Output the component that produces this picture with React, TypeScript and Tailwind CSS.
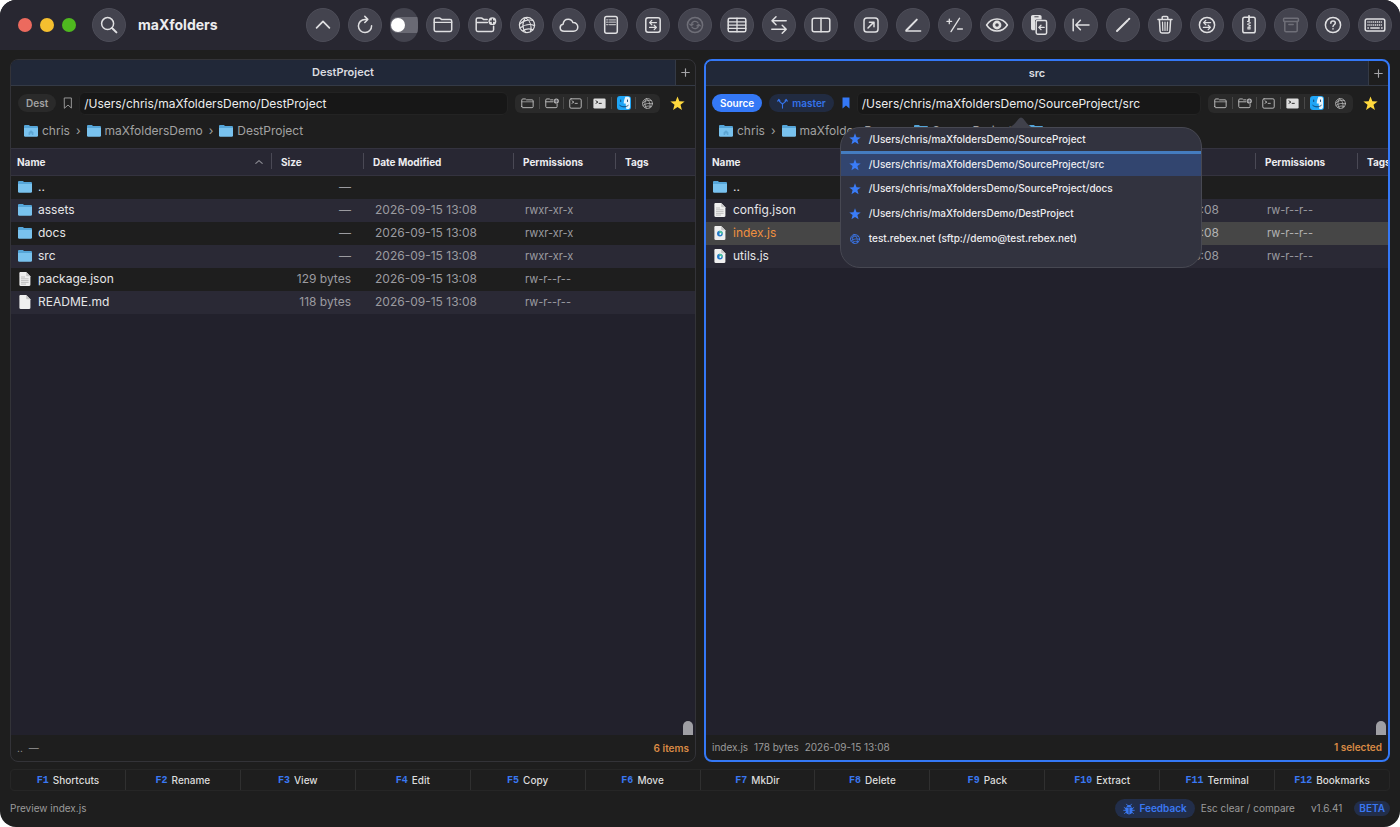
import type { ReactNode } from "react";
import clsx from "clsx";

type IconProps = { name: keyof typeof GLYPHS; size?: number; className?: string };

const FOLDER = (
  <>
    <path d="M1.2 14.8V4.6c0-1 .6-1.6 1.6-1.6h3.400c.6 0 1 .2 1.400.6l.9.8h8.600c1 0 1.600.6 1.600 1.600v8.800c0 1-.6 1.600-1.600 1.600H2.800c-1 0-1.600-.6-1.600-1.600z" />
    <path d="M1.200 7.400h17.500" strokeWidth="1.100" />
  </>
);

const GLOBE = (
  <g strokeWidth="1.200">
    <circle cx="10" cy="10" r="7.600" />
    <path d="M8.400 2.600c-3.400 4.400-3.400 10.400.2 14.900M8.400 2.600c4.600 3 6.600 8.600 5.200 14.100M16 5.400C11 4.200 5.400 6 2.500 9.400M17.600 10.600C13 8.800 7 9.800 3 13M16 14.800c-3.200-1.400-6.800-1.400-10.200.8" />
  </g>
);

// All glyphs share a 20x20 grid and are stroked with the current colour.
const GLYPHS = {
  search: (
    <>
      <circle cx="8.600" cy="8.600" r="6" />
      <path d="m13 13 4.400 4.400" strokeWidth="2" />
    </>
  ),
  up: <path d="M3.600 12.800 10 6.400l6.400 6.400" strokeWidth="1.700" />,
  refresh: <path d="M16.600 10.800A6.600 6.600 0 1 1 10 4.400h2.600M9.800 1.400l3 3-3 3.100" />,
  folder: FOLDER,
  newFolder: (
    <>
      <path d="M12.200 4.400H8.500l-.9-.8c-.4-.4-.8-.6-1.400-.6H2.800c-1 0-1.600.6-1.600 1.600v10.200c0 1 .6 1.600 1.600 1.600h14.200c1 0 1.600-.6 1.600-1.600v-3.600M1.200 7.400h11.200" />
      <circle cx="17.400" cy="6.200" r="3.900" fill="currentColor" stroke="none" />
      <path d="M17.400 4.200v4M15.400 6.200h4" stroke="#3c3c46" strokeWidth="1.200" />
    </>
  ),
  globe: GLOBE,
  cloud: (
    <path d="M5.200 16.200c-2.400 0-4-1.500-4-3.500 0-1.800 1.200-3.100 2.900-3.400.3-3 2.300-5.100 5.100-5.100 2.200 0 4 1.200 4.700 3.300 2.800-.1 4.900 1.800 4.900 4.400 0 2.400-1.800 4.300-4.300 4.300z" />
  ),
  document: (
    <>
      <rect x="3.700" y="1.600" width="12.600" height="16.600" rx="2" />
      <path d="M5.600 4.800h1.400M8.400 4.800h6M5.600 7.200h1.400M8.400 7.200h6M5.600 9.600h1.400M8.400 9.600h6" strokeWidth="1.200" opacity=".75" />
    </>
  ),
  syncBox: (
    <>
      <rect x="2.800" y="2.800" width="14.400" height="14.400" rx="2.200" />
      <path d="M13.400 7.600H6.800M8.800 5.400 6.600 7.600l2.200 2.200M6.600 12.400h6.600M11.200 10.200l2.200 2.200-2.200 2.200" strokeWidth="1.300" />
    </>
  ),
  syncCircle: (
    <>
      <circle cx="10" cy="10" r="7.600" />
      <path d="M6.400 9.600a3.700 3.700 0 0 1 6.600-1.800M13.600 10.400a3.700 3.700 0 0 1-6.600 1.800M4.800 9.200l1.600 1.400L8 9.200M12 10.800l1.600-1.400 1.600 1.400" strokeWidth="1.300" />
    </>
  ),
  table: (
    <>
      <rect x="1.200" y="3.200" width="17.600" height="13.600" rx="1.600" />
      <path d="M1.200 6.800h17.600M1.200 10.100h17.600M1.200 13.400h17.600M10 3.200v13.600" strokeWidth="1.300" />
    </>
  ),
  swap: <path d="M17.200 5.800H3.200M7 1.800 3 5.800l4 4M2.800 14.200h14M13.200 10.200l4 4-4 4" />,
  columns: (
    <>
      <rect x="1.200" y="3.200" width="17.600" height="13.600" rx="2" />
      <path d="M10 3.200v13.600" />
    </>
  ),
  open: (
    <>
      <rect x="3" y="3" width="14" height="14" rx="2.800" />
      <path d="m7 13 5.600-5.600M8.400 7.200H13v4.600" />
    </>
  ),
  rename: (
    <>
      <path d="M3.400 15.200 13.800 4.600" strokeWidth="2" />
      <path d="M3 16h14.600" />
    </>
  ),
  plusMinus: <path d="M6 16.600 14.600 3.200M2 6.400h4.600M4.300 4.100v4.600M12.600 14h4.800" strokeWidth="1.300" />,
  eye: (
    <>
      <path d="M-.4 10C2 6.200 5.800 4 10 4s8 2.200 10.400 6c-2.400 3.800-6.200 6-10.400 6S2 13.800-.4 10z" />
      <circle cx="10" cy="10" r="3.100" strokeWidth="2.600" />
    </>
  ),
  paste: (
    <>
      <path d="M3.800 0h7c1 0 1.800.8 1.800 1.800v2.600H7.600c-1 0-1.600.8-1.600 1.600v9.200H3.800c-1 0-1.800-.8-1.800-1.800V1.800C2 .8 2.800 0 3.800 0z" fill="currentColor" stroke="none" />
      <path d="M5.800 1.800h3.400" stroke="#43434e" strokeWidth="1" />
      <rect x="7.200" y="5.600" width="10.400" height="13.600" rx="1.400" />
      <path d="M15.200 12.400H9.800M12 10.200l-2.200 2.200 2.200 2.200" strokeWidth="1.300" />
    </>
  ),
  toStart: <path d="M2.200 4.200v11.600M18 10H5M9.400 5.200 4.800 10l4.600 4.800" />,
  pencil: <path d="M4 16 14.800 5.200M16 4l.3-.3" strokeWidth="2" />,
  trash: (
    <>
      <path d="M3 4.400h14M7.200 4.200V2.600c0-.7.400-1.100 1.100-1.100h3.400c.7 0 1.100.4 1.100 1.100v1.600M4.400 4.600l.7 11.600c.1 1 .8 1.700 1.800 1.700h6.200c1 0 1.700-.7 1.800-1.700l.7-11.600" />
      <path d="m7.500 7 .3 8.400M10 7v8.400M12.500 7l-.3 8.400" strokeWidth="1.200" />
    </>
  ),
  swapCircle: (
    <>
      <circle cx="10" cy="10" r="7.600" />
      <path d="M13.600 7.600H6.800M8.800 5.400 6.600 7.600l2.200 2.200M6.400 12.400h6.800M11.200 10.200l2.200 2.200-2.200 2.200" strokeWidth="1.300" />
    </>
  ),
  zip: (
    <>
      <rect x="3.800" y="2.200" width="12.400" height="15.600" rx="1.800" />
      <path d="M10 .8v5" strokeWidth="1.800" />
      <path d="M8.600 6.400h1.400M10 7.800h1.400M8.600 9.200h1.400M10 10.600h1.400M9 12.200h2v1.800H9z" strokeWidth="1.200" />
    </>
  ),
  archive: (
    <>
      <rect x="2.600" y="3.200" width="14.800" height="3.200" rx=".8" />
      <path d="M3.800 6.400v9c0 .8.600 1.400 1.400 1.400h9.600c.8 0 1.400-.6 1.400-1.400v-9M7.800 9.400h4.400" />
    </>
  ),
  help: (
    <>
      <circle cx="10" cy="10" r="7.600" />
      <path d="M7.800 8.200c0-1.300.9-2.100 2.200-2.100s2.300.8 2.300 1.900c0 1.800-2.300 1.700-2.300 3.500M10 13.700v.2" />
    </>
  ),
  keyboard: (
    <>
      <rect x=".2" y="4" width="19.600" height="12" rx="1.800" />
      <path d="M2.400 7h15.200M2.400 9.900h15.200" strokeDasharray="1.200 .7" strokeLinecap="butt" strokeWidth="1.500" />
      <path d="M2.400 13.100h1.500M5.300 13.100h9.400M16.100 13.100h1.500" strokeLinecap="butt" />
    </>
  ),
  terminal: (
    <>
      <rect x="1.200" y="2.800" width="17.600" height="14.400" rx="2" />
      <path d="m4.600 6 3 1.800-3 1.800M9.400 9.800h3.400" strokeWidth="1.400" />
    </>
  ),
  terminalFill: (
    <>
      <rect x=".6" y="2.200" width="18.800" height="15.600" rx="2" fill="currentColor" stroke="none" />
      <path d="m4.600 6 3 1.800-3 1.800M9.400 9.800h3.400" stroke="#2a2a2a" strokeWidth="1.500" />
    </>
  ),
  branch: <path d="M10 18.400V12M10 12C10 8 3.400 9.400 3.400 3.600M10 12c0-4 6.600-2.600 6.600-8.400M1.200 5.600l2.200-3 2.200 3M14.400 5.600l2.200-3 2.200 3" strokeWidth="2" />,
  bookmark: <path d="M4.400 1.600h11.200v16.800L10 13.400l-5.600 5z" />,
  bookmarkFill: <path d="M4.200 1h11.600v18L10 14.200 4.200 19z" fill="currentColor" stroke="none" />,
  star: <path d="m10 .6 2.500 6.500 7 .3-5.500 4.400 1.900 6.800L10 14.800l-5.900 3.800L6 11.800.5 7.400l7-.3z" fill="currentColor" stroke="none" />,
  bug: (
    <>
      <path d="M5 8.400h10v5a5 5 0 0 1-10 0zM6.400 6.800a3.700 3.700 0 0 1 7.200 0" fill="currentColor" />
      <path d="M10 9v8" stroke="#222e4a" strokeWidth="1.200" />
      <path d="M7.400 4 6 2M12.600 4 14 2M5 9.600 2 7.600M5 12.200H1.200M5.600 15l-3 2.400M15 9.600l3-2M15 12.200h3.800M14.400 15l3 2.400" />
    </>
  ),
  sort: <path d="M2 13.600 10 6.400l8 7.200" strokeWidth="2.800" />,
  plus: <path d="M10 1.600v16.800M1.600 10h16.800" strokeWidth="2.600" />,
};

function Icon({ name, size = 20, className }: IconProps) {
  return (
    <svg
      width={size}
      height={size}
      viewBox="0 0 20 20"
      fill="none"
      stroke="currentColor"
      strokeWidth="1.5"
      strokeLinecap="round"
      strokeLinejoin="round"
      className={clsx("shrink-0 overflow-visible", className)}
      aria-hidden
    >
      {GLYPHS[name]}
    </svg>
  );
}

function FolderIcon({ home }: { home?: boolean }) {
  return (
    <svg width="14" height="12" viewBox="0 0 14 12" className="shrink-0" aria-hidden>
      <path d="M0 10.600V1.200C0 .5.500 0 1.200 0h3.200c.4 0 .7.100 1 .4l.8.700h6.600c.7 0 1.200.5 1.200 1.200v8.300z" fill="#55a5d8" />
      <path d="M0 3h14v7.600c0 .8-.4 1.200-1.200 1.200H1.200C.4 11.800 0 11.400 0 10.600z" fill="#79c2ee" />
      {home && <path d="M4.600 7.200 7 5.200l2.400 2v2.900H7.800V8.400H6.200v1.700H4.600z" fill="#5ea6d3" />}
    </svg>
  );
}

function FileIcon({ kind }: { kind: "json" | "text" | "js" }) {
  return (
    <svg width="14" height="14" viewBox="0 0 14 14" className="shrink-0" aria-hidden>
      <path d="M1.400 1.200C1.400.5 1.800.1 2.500.1h5.700l4.200 4.200v8.500c0 .7-.4 1.100-1.100 1.100H2.500c-.7 0-1.100-.4-1.100-1.100z" fill="#efefef" />
      <path d="M8.200.1v3.200c0 .6.400 1 1 1h3.200z" fill="#c6c6c6" />
      {kind === "json" && <path d="M3 5h4M3 6.800h7.600M3 8.600h7.600M3 10.400h7.600M3 12.100h5" stroke="#b4b4b4" strokeWidth=".8" />}
      {kind === "js" && (
        <>
          <circle cx="6.900" cy="7.600" r="2.900" fill="#2479c9" />
          <path d="M5.800 5a2.900 2.900 0 0 1 4 2.800H7.200z" fill="#4fc79b" />
          <circle cx="7.300" cy="7.900" r="1" fill="#e8f4fb" />
        </>
      )}
    </svg>
  );
}

function FinderIcon() {
  return (
    <svg width="14" height="14" viewBox="0 0 14 14" className="shrink-0" aria-hidden>
      <rect width="14" height="14" rx="3" fill="#1fa5f6" />
      <path d="M8.400.8C7.400 3 6.800 5.200 6.700 7.600h2c0 1.900.2 3.700.7 5.400h1.800c1 0 1.800-.8 1.800-1.800V2.800c0-1.200-.8-2-1.800-2z" fill="#e6f4fc" />
      <path d="M3.700 4v1.500M10.500 4v1.500M2.800 9.400c2.400 2 6 2 8.400 0" stroke="#123a63" strokeWidth=".9" strokeLinecap="round" fill="none" />
    </svg>
  );
}

type ToolItem = { icon: keyof typeof GLYPHS; label: string; disabled?: boolean };

const NAV_TOOLS: ToolItem[] = [
  { icon: "folder", label: "Open folder" },
  { icon: "newFolder", label: "New folder" },
  { icon: "globe", label: "Network" },
  { icon: "cloud", label: "Cloud" },
  { icon: "document", label: "Notes" },
  { icon: "syncBox", label: "Sync panes" },
  { icon: "syncCircle", label: "Sync", disabled: true },
  { icon: "table", label: "Table view" },
  { icon: "swap", label: "Swap panes" },
  { icon: "columns", label: "Split view" },
];

const FILE_TOOLS: ToolItem[] = [
  { icon: "open", label: "Open" },
  { icon: "rename", label: "Rename" },
  { icon: "plusMinus", label: "Compare" },
  { icon: "eye", label: "Preview" },
  { icon: "paste", label: "Copy to other pane" },
  { icon: "toStart", label: "Move to other pane" },
  { icon: "pencil", label: "Edit" },
  { icon: "trash", label: "Delete" },
  { icon: "swapCircle", label: "Transfer" },
  { icon: "zip", label: "Pack" },
  { icon: "archive", label: "Extract", disabled: true },
  { icon: "help", label: "Help" },
  { icon: "keyboard", label: "Keyboard shortcuts" },
];

function ToolButton({ icon, label, disabled }: ToolItem) {
  return (
    <button
      type="button"
      aria-label={label}
      disabled={disabled}
      className={clsx(
        "flex h-[34px] w-[34px] shrink-0 items-center justify-center rounded-full border border-[#4d4d58] bg-[#43434e]",
        disabled ? "text-[#6f6f78]" : "text-[#e0e0e2]",
      )}
    >
      <Icon name={icon} />
    </button>
  );
}

function TitleBar() {
  return (
    <header className="flex h-[50px] shrink-0 items-center bg-[#282731] pr-2 pl-[18px]">
      <div className="flex gap-2">
        <button type="button" aria-label="Close" className="h-3.5 w-3.5 rounded-full bg-[#ec6a5e]" />
        <button type="button" aria-label="Minimize" className="h-3.5 w-3.5 rounded-full bg-[#f5bf2f]" />
        <button type="button" aria-label="Zoom" className="h-3.5 w-3.5 rounded-full bg-[#4fb81f]" />
      </div>
      <div className="ml-4">
        <ToolButton icon="search" label="Search" />
      </div>
      <h1 className="ml-3 text-sm font-bold text-[#ececee]">maXfolders</h1>
      <div className="ml-auto flex items-center gap-2">
        <ToolButton icon="up" label="Parent folder" />
        <ToolButton icon="refresh" label="Refresh" />
        <label className="relative flex h-[34px] w-7 items-center overflow-hidden rounded-[14px] bg-[#43434e]">
          <input type="checkbox" role="switch" aria-label="Show hidden files" className="peer sr-only" />
          <span className="flex h-4 w-7 items-center rounded-l-full bg-[#6a6a74] pl-px peer-checked:justify-end peer-checked:bg-[#3478f6]">
            <span className="h-3.5 w-3.5 rounded-full bg-white" />
          </span>
        </label>
        {NAV_TOOLS.map((t) => (
          <ToolButton key={t.icon} {...t} />
        ))}
        <div className="ml-2 flex gap-2">
          {FILE_TOOLS.map((t) => (
            <ToolButton key={t.icon} {...t} />
          ))}
        </div>
      </div>
    </header>
  );
}

const PANE_TOOLS: { label: string; node: ReactNode }[] = [
  { label: "Browse", node: <Icon name="folder" size={13} /> },
  { label: "Create folder", node: <Icon name="newFolder" size={13} /> },
  { label: "Terminal", node: <Icon name="terminal" size={13} /> },
  { label: "External terminal", node: <Icon name="terminalFill" size={13} className="text-[#dedede]" /> },
  { label: "Reveal in Finder", node: <FinderIcon /> },
  { label: "Connect", node: <Icon name="globe" size={13} /> },
];

const BOOKMARKS = [
  "/Users/chris/maXfoldersDemo/SourceProject",
  "/Users/chris/maXfoldersDemo/SourceProject/src",
  "/Users/chris/maXfoldersDemo/SourceProject/docs",
  "/Users/chris/maXfoldersDemo/DestProject",
  "test.rebex.net (sftp://demo@test.rebex.net)",
];

function BookmarkPopover() {
  return (
    <div className="absolute top-[35px] -left-[17px] z-10 w-[362px]">
      <svg width="26" height="11" viewBox="0 0 26 11" className="absolute -top-2.5 left-[168px]" aria-hidden>
        <path d="M0 11C5 10 8 5 10.500 2c1.600-2 3.400-2 5 0C18 5 21 10 26 11z" fill="#40414b" />
      </svg>
      <ul className="h-[141px] overflow-hidden rounded-[20px] border border-[#474852] bg-[#32333f]">
        {BOOKMARKS.map((path, i) => (
          <li key={path}>
            <button
              type="button"
              className={clsx(
                "flex w-full items-center gap-2 px-2 text-left text-[10px] font-medium text-[#ededf0]",
                i === 0 && "h-[23px]",
                i === 1 && "h-[25px] border-t-3 border-[#447cc0] bg-[#32456f]",
                i > 1 && "mt-px h-6",
              )}
            >
              <Icon name={path.startsWith("/") ? "star" : "globe"} size={12} className="text-[#3a7cf8]" />
              {path}
            </button>
          </li>
        ))}
      </ul>
    </div>
  );
}

type Entry = { name: string; kind: "folder" | "json" | "text" | "js"; size: string; date: string; perms: string };

type PaneProps = {
  title: string;
  path: string;
  crumbs: string[];
  entries: Entry[];
  active?: boolean;
  selected?: string;
  nameWidth: string;
  status: string[];
  summary: string;
};

const DATE = "2026-09-15 13:08";

function FileTable({ entries, selected, active, nameWidth }: Pick<PaneProps, "entries" | "selected" | "active" | "nameWidth">) {
  const th = "relative overflow-hidden pl-2.5 text-left text-[10px] font-bold text-[#ededf0]";
  const divider = "before:absolute before:top-1 before:left-0 before:h-4 before:w-px before:bg-[#4a4955]";
  return (
    <table className="w-full table-fixed border-collapse">
      <colgroup>
        <col className={nameWidth} />
        <col className="w-[92px]" />
        <col className="w-[150px]" />
        <col className="w-[102px]" />
        <col />
      </colgroup>
      <thead>
        <tr className="h-[27px] border-y border-[#34333f] bg-[#282733]">
          <th scope="col" className="pr-2 pl-1.5 text-left text-[10px] font-bold text-[#ededf0]">
            <button type="button" className="flex w-full items-center justify-between">
              Name
              {!active && <Icon name="sort" size={8} className="text-[#8b8b93]" />}
            </button>
          </th>
          {["Size", "Date Modified", "Permissions", "Tags"].map((label) => (
            <th key={label} scope="col" className={clsx(th, divider)}>
              {label}
            </th>
          ))}
        </tr>
      </thead>
      <tbody>
        {entries.map((e) => {
          const isSelected = e.name === selected;
          return (
            <tr
              key={e.name}
              className={clsx(
                "h-[23px] text-xs",
                isSelected ? "bg-[#464646] text-[#b4b4b4]" : "text-[#9b9ba0] odd:bg-[#1e1e1e] even:bg-[#2a2935]",
              )}
            >
              <td className="pl-[7px]">
                <span className={clsx("flex items-center gap-1.5", isSelected ? "text-[#f0903f]" : "text-[#e6e6e8]")}>
                  {e.kind === "folder" ? <FolderIcon /> : <FileIcon kind={e.kind} />}
                  {e.name}
                </span>
              </td>
              <td className="pr-3 text-right">{e.size}</td>
              <td className="pl-3">{e.date}</td>
              <td className="pl-3 text-[11px]">{e.perms}</td>
              <td />
            </tr>
          );
        })}
      </tbody>
    </table>
  );
}

function Pane({ title, path, crumbs, entries, active, selected, nameWidth, status, summary }: PaneProps) {
  return (
    <section
      className={clsx(
        "flex min-w-0 flex-col rounded-lg",
        active ? "border-2 border-[#3478f6]" : "border border-[#333338]",
      )}
    >
      <div className={clsx("flex items-stretch border-b border-[#343a46]", active ? "h-[25px]" : "h-[26px]")}>
        <button type="button" className="flex-1 rounded-tl-md bg-[#212838] text-[11px] font-semibold text-[#dcdde0]">
          {title}
        </button>
        <button type="button" aria-label="New tab" className="flex w-5 items-center justify-center border-l border-[#343a46] text-[#a5a5a8]">
          <Icon name="plus" size={9} />
        </button>
      </div>

      <div className={clsx("flex h-[34px] items-center pr-2.5", active ? "pl-1.5" : "pl-[7px]")}>
        <span
          className={clsx(
            "flex h-[18px] items-center rounded-full px-2 text-[10px] font-semibold",
            active ? "bg-[#3478f6] text-white" : "bg-[#2a2a2a] text-[#a2a2a2]",
          )}
        >
          {active ? "Source" : "Dest"}
        </span>
        {active && (
          <button type="button" className="ml-[7px] flex h-[18px] items-center gap-1 rounded-full bg-[#212b41] px-2 text-[10px] font-semibold text-[#3472e8]">
            <Icon name="branch" size={11} />
            master
          </button>
        )}
        <button type="button" aria-label="Bookmarks" className={clsx("ml-1.5", active ? "text-[#3478f6]" : "text-[#a2a2a2]")}>
          <Icon name={active ? "bookmarkFill" : "bookmark"} size={12} />
        </button>
        <div className="relative ml-[5px] min-w-0 flex-1">
          <input
            type="text"
            aria-label={`${title} path`}
            defaultValue={path}
            className="block h-[23px] w-full rounded-md border border-[#232323] bg-[#171717] px-1 text-xs text-[#ededed] outline-none"
          />
          {active && <BookmarkPopover />}
        </div>
        <div className="ml-[7px] flex h-[19px] items-center rounded-md bg-[#2a2a2a] px-1.5 text-[#b9b9b9]">
          {PANE_TOOLS.map((t, i) => (
            <div key={t.label} className="flex items-center">
              {i > 0 && <span className="mx-[5px] h-3 w-px bg-[#484848]" />}
              <button type="button" aria-label={t.label} className="flex w-[13px] justify-center">
                {t.node}
              </button>
            </div>
          ))}
        </div>
        <button type="button" aria-label="Favourite" className="ml-2.5 text-[#fed83d]">
          <Icon name="star" size={15} />
        </button>
      </div>

      <nav aria-label={`${title} location`} className="flex h-7 items-center px-[13px] pb-1.5 text-xs text-[#a2a2a2]">
        {crumbs.map((c, i) => (
          <span key={c} className="flex items-center">
            {i > 0 && <span className="mx-1.5">›</span>}
            <a href={`#${c}`} className="flex items-center gap-1">
              <FolderIcon home={i === 0} />
              {c}
            </a>
          </span>
        ))}
      </nav>

      <div className="relative flex-1 bg-[#22212c]">
        <FileTable entries={entries} selected={selected} active={active} nameWidth={nameWidth} />
        <span className="absolute right-0.5 bottom-0 h-3.5 w-2.5 rounded-t-full bg-[#9f9fa4]" />
      </div>

      <footer className={clsx("flex items-center justify-between px-1.5 text-[10px] text-[#9b9b9b]", active ? "h-[25px]" : "h-[26px]")}>
        <span className="flex gap-1.5">
          {status.map((s) => (
            <span key={s}>{s}</span>
          ))}
        </span>
        <span className="font-semibold text-[#d98a45]">{summary}</span>
      </footer>
    </section>
  );
}

const UP: Entry = { name: "..", kind: "folder", size: "—", date: "", perms: "" };

const DEST: Entry[] = [
  UP,
  { name: "assets", kind: "folder", size: "—", date: DATE, perms: "rwxr-xr-x" },
  { name: "docs", kind: "folder", size: "—", date: DATE, perms: "rwxr-xr-x" },
  { name: "src", kind: "folder", size: "—", date: DATE, perms: "rwxr-xr-x" },
  { name: "package.json", kind: "json", size: "129 bytes", date: DATE, perms: "rw-r--r--" },
  { name: "README.md", kind: "text", size: "118 bytes", date: DATE, perms: "rw-r--r--" },
];

const SOURCE: Entry[] = [
  UP,
  { name: "config.json", kind: "json", size: "64 bytes", date: DATE, perms: "rw-r--r--" },
  { name: "index.js", kind: "js", size: "178 bytes", date: DATE, perms: "rw-r--r--" },
  { name: "utils.js", kind: "js", size: "96 bytes", date: DATE, perms: "rw-r--r--" },
];

const F_KEYS = ["Shortcuts", "Rename", "View", "Edit", "Copy", "Move", "MkDir", "Delete", "Pack", "Extract", "Terminal", "Bookmarks"];

export default function App() {
  return (
    <div className="flex min-h-screen flex-col overflow-hidden rounded-2xl bg-[#1e1e1e] font-['Inter',sans-serif]">
      <TitleBar />
      <main className="grid flex-1 grid-cols-2 gap-2 px-2.5 pt-[9px]">
        <Pane
          title="DestProject"
          path="/Users/chris/maXfoldersDemo/DestProject"
          crumbs={["chris", "maXfoldersDemo", "DestProject"]}
          entries={DEST}
          nameWidth="w-[260px]"
          status={["..", "—"]}
          summary="6 items"
        />
        <Pane
          title="src"
          path="/Users/chris/maXfoldersDemo/SourceProject/src"
          crumbs={["chris", "maXfoldersDemo", "SourceProject", "src"]}
          entries={SOURCE}
          active
          selected="index.js"
          nameWidth="w-[307px]"
          status={["index.js", "178 bytes", DATE]}
          summary="1 selected"
        />
      </main>
      <div className="mx-2.5 mt-[7px] flex h-[22px] divide-x divide-[#303030] rounded border border-[#262626]">
        {F_KEYS.map((label, i) => (
          <button key={label} type="button" className="flex flex-1 items-center justify-center gap-1 text-[10px] font-medium text-[#dcdcdc]">
            <kbd className="font-['Liberation_Mono',monospace] text-[10px] font-bold text-[#3a78f2]">F{i + 1}</kbd>
            {label}
          </button>
        ))}
      </div>
      <footer className="flex h-9 items-center px-2.5 pb-px text-[10px] text-[#9b9b9b]">
        <span>Preview index.js</span>
        <button type="button" className="ml-auto flex h-[19px] items-center gap-1 rounded-full bg-[#222e4a] px-2 font-semibold text-[#3a78f2]">
          <Icon name="bug" size={12} />
          Feedback
        </button>
        <span className="ml-1.5">Esc clear / compare</span>
        <span className="ml-4">v1.6.41</span>
        <span className="ml-3 rounded-full bg-[#222e4a] px-[5px] font-semibold text-[#3a78f2]">BETA</span>
      </footer>
    </div>
  );
}
